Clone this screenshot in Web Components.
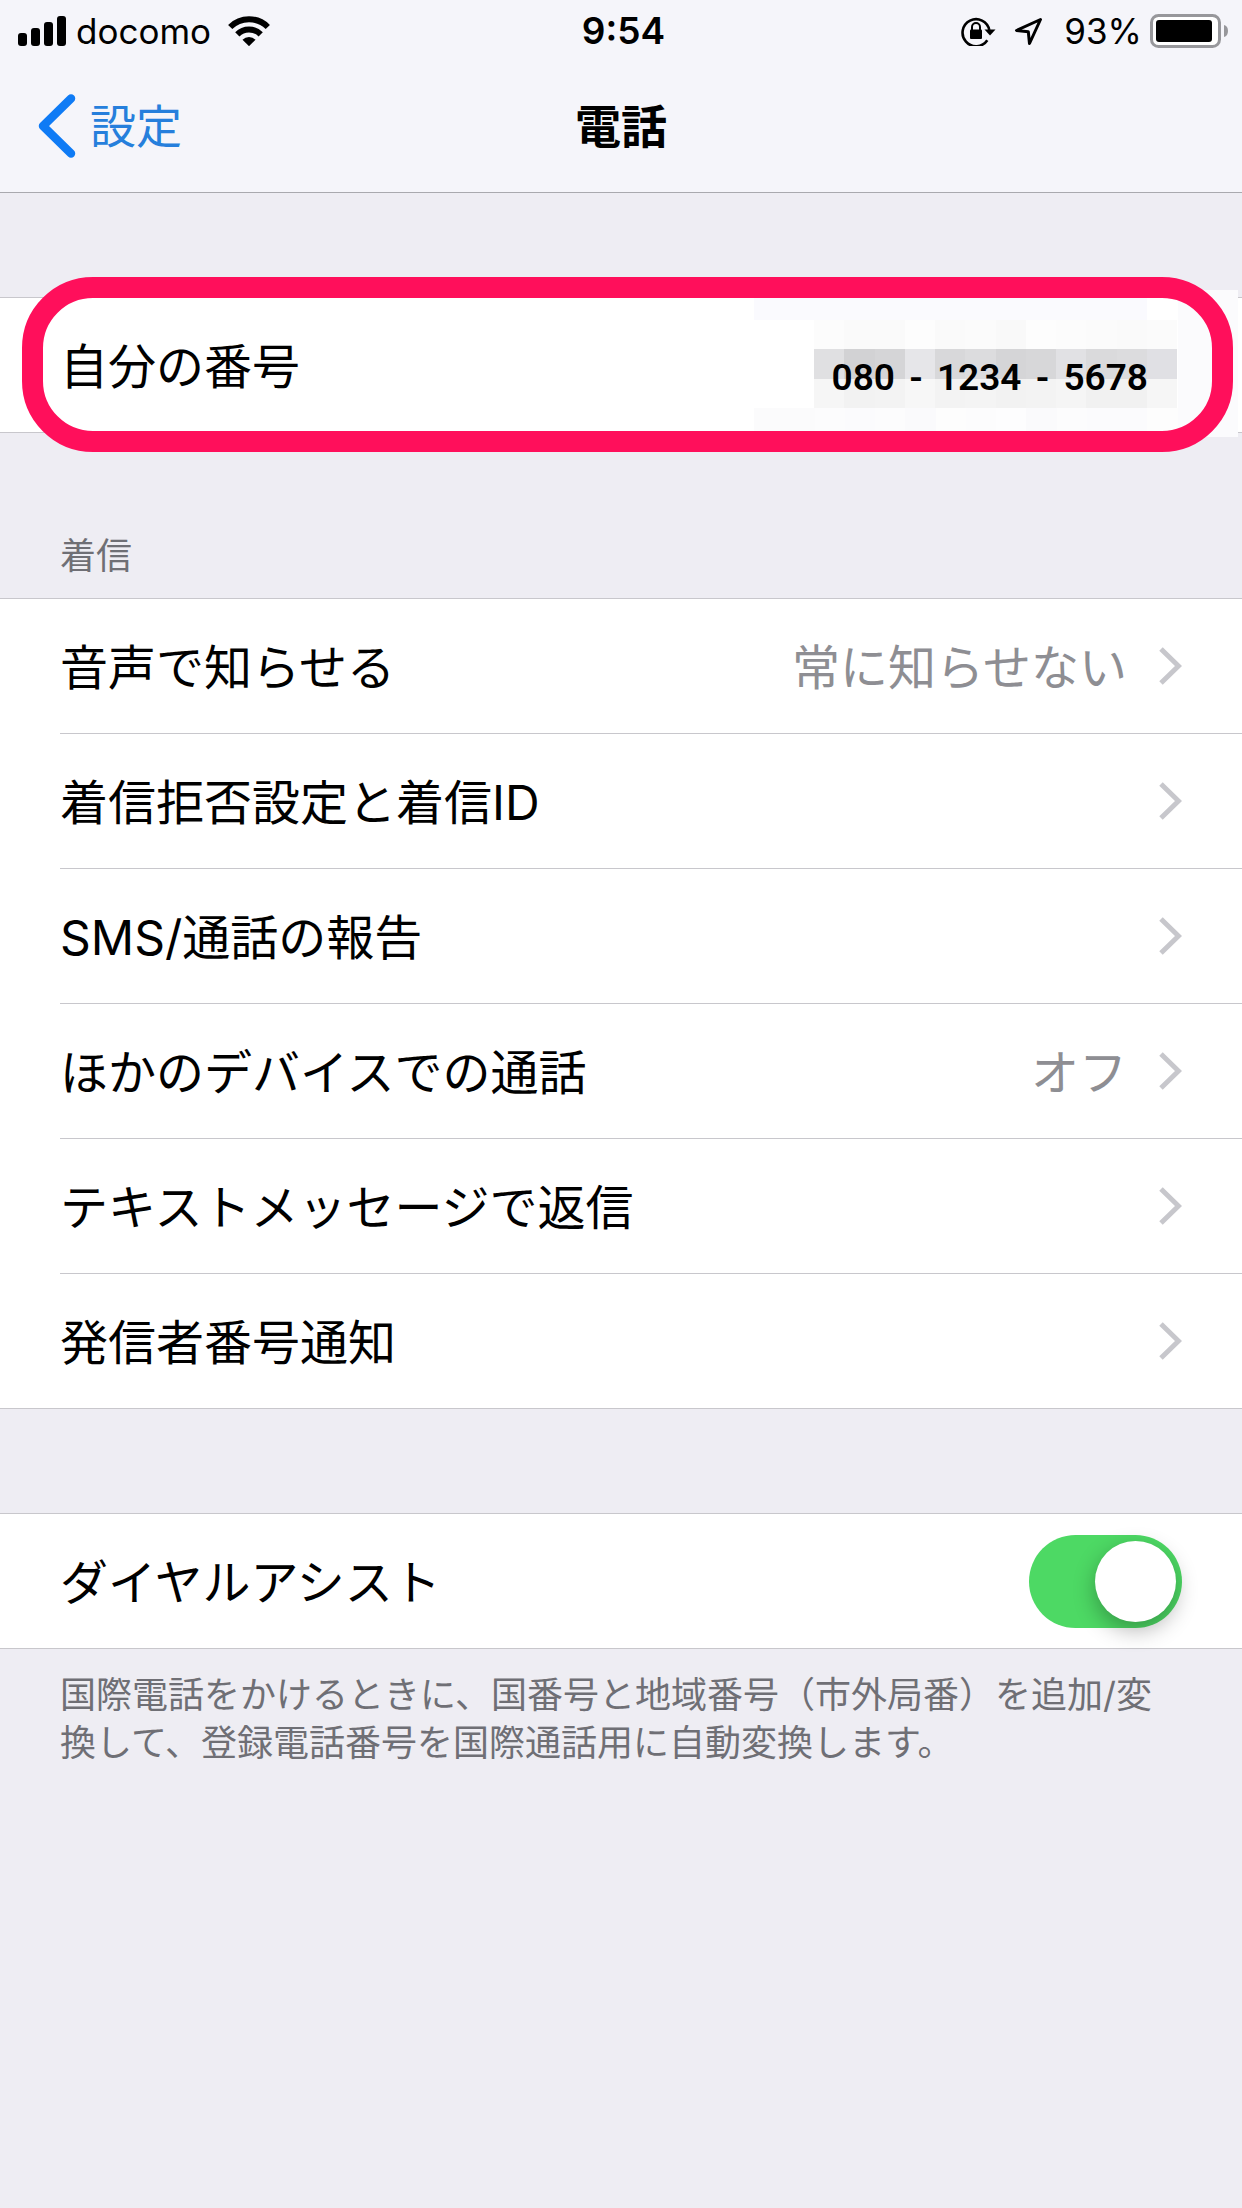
<!DOCTYPE html>
<html lang="ja">
<head>
<meta charset="utf-8">
<meta name="viewport" content="width=device-width, initial-scale=1">
<title>電話</title>
<style>
  html { background: #eeedf3; }
  body {
    margin: 0;
    min-height: 100vh;
    background: #eeedf3;
    color: #000;
    font-family: Inter, "Noto Sans CJK JP", sans-serif;
    font-size: 48px;
    line-height: 60px;
  }
</style>
</head>
<body>
<settings-page>
  <status-bar slot="top" carrier="docomo" time="9:54" battery="93"></status-bar>
  <nav-bar slot="top" back="設定">電話</nav-bar>

  <settings-group>
    <settings-row label="自分の番号">
      <masked-number slot="value">080 <i>-</i> 1234 <i>-</i> 5678</masked-number>
    </settings-row>
    <highlight-ring slot="overlay"></highlight-ring>
  </settings-group>

  <settings-group heading="着信">
    <settings-row link label="音声で知らせる"><span slot="value">常に知らせない</span></settings-row>
    <settings-row link label="着信拒否設定と着信ID"></settings-row>
    <settings-row link label="SMS/通話の報告"></settings-row>
    <settings-row link label="ほかのデバイスでの通話"><span slot="value">オフ</span></settings-row>
    <settings-row link label="テキストメッセージで返信"></settings-row>
    <settings-row link label="発信者番号通知"></settings-row>
  </settings-group>

  <settings-group note="国際電話をかけるときに、国番号と地域番号（市外局番）を追加/変換して、登録電話番号を国際通話用に自動変換します。">
    <switch-row label="ダイヤルアシスト" checked></switch-row>
  </settings-group>
</settings-page>

<script>
  class Base extends HTMLElement {
    connectedCallback() {
      if (this.shadowRoot) return;
      this.attachShadow({ mode: "open" }).innerHTML = this.render();
    }
    attr(name) { return this.getAttribute(name) || ""; }
  }

  customElements.define("settings-page", class extends Base {
    render() {
      return `
      <style>
        :host { display: flex; flex-direction: column; }
        header { background: #f5f5fa; border-bottom: 1px solid #a9a9ae; }
        main { display: flex; flex-direction: column; }
      </style>
      <header><slot name="top"></slot></header>
      <main><slot></slot></main>`;
    }
  });

  customElements.define("status-bar", class extends Base {
    render() {
      return `
      <style>
        :host {
          display: grid; grid-template-columns: 1fr auto 1fr; align-items: center;
          height: 60px; padding: 2px 13px 0 18px; box-sizing: border-box; font-size: 35px; line-height: 58px;
        }
        div { display: flex; align-items: center; }
        .right { justify-content: flex-end; }
        svg { display: block; flex: none; }
        .carrier { margin: 0 17px 0 10px; }
        b { font-size: 37px; font-weight: 600; }
        .level { margin: 0 8px 0 21px; }
        .arrow { margin-left: 18px; }
      </style>
      <div>
        <svg width="48" height="30" viewBox="0 0 48 30" aria-hidden="true">
          <rect x="0" y="17" width="9" height="13" rx="3"/><rect x="13" y="12" width="9" height="18" rx="3"/>
          <rect x="26" y="6" width="9" height="24" rx="3"/><rect x="39" y="0" width="9" height="30" rx="3"/>
        </svg>
        <span class="carrier">${this.attr("carrier")}</span>
        <svg width="42" height="30" viewBox="0 0 42 30" aria-hidden="true">
          <g fill="none" stroke="#000" stroke-width="6">
            <path d="M2.2 11A26.600 26.600 0 0 1 39.800 11"/>
            <path d="M9.300 18.300A16.500 16.500 0 0 1 32.700 18.300"/>
          </g>
          <path d="M14.500 23.700A9.200 9.200 0 0 1 27.500 23.700L21 30.200Z"/>
        </svg>
      </div>
      <b>${this.attr("time")}</b>
      <div class="right">
        <svg width="35" height="30" viewBox="0 0 35 30" aria-hidden="true">
          <path d="M26.300 24.200A13.500 13.500 0 1 1 28.300 14" fill="none" stroke="#000" stroke-width="2.600"/>
          <path d="M23.500 13.500H34.500L29 19.500Z"/>
          <rect x="9" y="13.500" width="12" height="9.500" rx="1"/>
          <path d="M11 14V11A4 4 0 0 1 19 11V14" fill="none" stroke="#000" stroke-width="2"/>
        </svg>
        <svg class="arrow" width="29" height="30" viewBox="0 0 29 30" aria-hidden="true">
          <path d="M26.500 3.500L2.500 14.500L14.300 15.700L15.500 27.500Z" fill="none" stroke="#000" stroke-width="3" stroke-linejoin="round"/>
        </svg>
        <span class="level">${this.attr("battery")}%</span>
        <svg width="79" height="34" viewBox="0 0 79 34" aria-hidden="true">
          <rect x="1.500" y="1.500" width="68" height="31" rx="7" fill="#fff" stroke="#97979b" stroke-width="3"/>
          <rect x="6" y="6" width="56" height="22" rx="3"/>
          <path d="M74 11Q78 12 78 17Q78 22 74 23Z" fill="#97979b"/>
        </svg>
      </div>`;
    }
  });

  customElements.define("nav-bar", class extends Base {
    render() {
      return `
      <style>
        :host {
          display: grid; grid-template-columns: 1fr auto 1fr; align-items: center;
          height: 132px; padding: 0 38px; font-size: 46px;
        }
        a { display: flex; align-items: center; gap: 14px; justify-self: start; color: #267fdc; text-decoration: none; }
        h1 { margin: 0; font-size: 46px; font-weight: 700; }
      </style>
      <a href="#settings">
        <svg width="38" height="64" viewBox="0 0 38 64" aria-hidden="true">
          <path d="M33 4.500L5 32L33 59.500" fill="none" stroke="#0f7bf5" stroke-width="8.500" stroke-linecap="round" stroke-linejoin="round"/>
        </svg>
        <span>${this.attr("back")}</span>
      </a>
      <h1><slot></slot></h1>`;
    }
  });

  customElements.define("settings-group", class extends Base {
    render() {
      const heading = this.attr("heading"), note = this.attr("note");
      return `
      <style>
        :host { display: block; padding-top: ${heading ? 99 : 104}px; color: #000; }
        h2, p { margin: 0; padding: 0 60px; font-size: 36px; font-weight: 400; line-height: 48px; color: #6f6f75; }
        h2 { padding-bottom: 18px; }
        p { padding-top: 22px; }
        section { position: relative; background: #fff; border-bottom: 1px solid #c8c7cc; }
        ::slotted(:first-child) { --inset: 0px; }
      </style>
      ${heading ? `<h2>${heading}</h2>` : ""}
      <section><slot></slot><slot name="overlay"></slot></section>
      ${note ? `<p>${note}</p>` : ""}`;
    }
  });

  const rowStyle = `
    :host { display: block; }
    .line { height: 1px; margin-left: var(--inset, 60px); background: #c8c7cc; }
    .row {
      display: flex; align-items: center; justify-content: space-between;
      min-height: 134px; padding: 0 60px; color: #000; text-decoration: none;
    }
    .label, slot[name="value"] { display: block; padding-top: 4px; }`;

  customElements.define("settings-row", class extends Base {
    render() {
      const link = this.hasAttribute("link");
      const tag = link ? "a" : "div";
      return `
      <style>
        ${rowStyle}
        .end { display: flex; align-items: center; gap: 32px; color: #8e8e93; }
      </style>
      <div class="line"></div>
      <${tag} class="row" ${link ? 'href="#detail"' : ""}>
        <span class="label">${this.attr("label")}</span>
        <span class="end">
          <slot name="value"></slot>
          ${link ? `<svg width="23" height="38" viewBox="0 0 23 38" aria-hidden="true">
            <path d="M2 2L19.500 19L2 36" fill="none" stroke="#c7c7cc" stroke-width="5"/></svg>` : ""}
        </span>
      </${tag}>`;
    }
  });

  customElements.define("switch-row", class extends Base {
    render() {
      return `
      <style>
        ${rowStyle}
        input {
          appearance: none; display: flex; align-items: center; margin: 0; padding: 0 6px;
          box-sizing: border-box; width: 153px; height: 93px; border-radius: 47px; background: #dcdce0;
        }
        input::before {
          content: ""; width: 81px; height: 81px; border-radius: 50%; background: #fff;
          box-shadow: 0 8px 22px rgba(0, 0, 0, .3);
        }
        input:checked { justify-content: flex-end; background: #4dd964; }
      </style>
      <div class="line"></div>
      <div class="row">
        <label class="label" for="toggle">${this.attr("label")}</label>
        <input id="toggle" type="checkbox" role="switch" ${this.hasAttribute("checked") ? "checked" : ""}>
      </div>`;
    }
  });

  /* A phone number laid over a pixelated patch. */
  customElements.define("masked-number", class extends Base {
    render() {
      const band = (y, h, x, fills, w = 30.25) => fills.map((f, i) =>
        `<rect x="${x + i * w}" y="${y}" width="${w}" height="${h}" fill="${f}"/>`).join("");
      return `
      <style>
        :host {
          display: block; margin-right: 34px; padding-top: 22px; color: #000;
          font: 600 37px/60px Roboto, "Noto Sans CJK JP", sans-serif;
        }
        svg { position: absolute; right: 4px; top: -7px; }
        span { position: relative; }
        ::slotted(i) { font-style: normal; margin: 0 5px; }
      </style>
      <svg width="484" height="148" viewBox="0 0 484 148" shape-rendering="crispEdges" aria-hidden="true">
        <rect x="424" y="0" width="60" height="147" fill="#fbfbfd"/>
        ${band(8, 22, 0, Array(13).fill("#fafafe"))}
        ${band(30, 29, 60, ["#fcfcfc","#fafafa","#fafafa","#fdfdfd","#fafafa","#fbfbfb","#f9f9f9","#fdfdfd","#fcfcfc","#fbfbfb","#fafafa","#fbfbfb"])}
        ${band(59, 30, 60, ["#e0e0e2","#d2d2d4","#d5d5d7","#e6e6e9","#d8d8da","#dcdcde","#d5d5d7","#d7d7d9","#e1e1e4","#dadadc","#dcdcde","#e0e0e4"])}
        ${band(89, 29, 60, ["#f6f6f6","#f2f2f2","#f3f3f3","#f7f7f7","#f3f3f3","#f4f4f4","#f2f2f2","#f3f3f3","#f5f5f5","#f1f1f1","#f1f1f1","#f6f6f6"])}
        ${band(118, 23, 0, ["#fbfbfc","#fbfbfc","#fcfcfd","#fbfbfd","#fcfcfd","#fafafc","#fdfdfd","#fcfcfd","#fdfdfe","#fafafc","#fcfcfd","#fbfbfd","#fbfbfd","#fdfdfd"])}
      </svg>
      <span><slot></slot></span>`;
    }
  });

  /* A marker outline drawn round a whole row. */
  customElements.define("highlight-ring", class extends Base {
    render() {
      return `
      <style>
        :host {
          position: absolute; inset: -20px 9px -20px 22px; box-sizing: border-box;
          border: 21px solid #ff0f5b; border-radius: 71px; pointer-events: none;
        }
      </style>`;
    }
  });
</script>
</body>
</html>
